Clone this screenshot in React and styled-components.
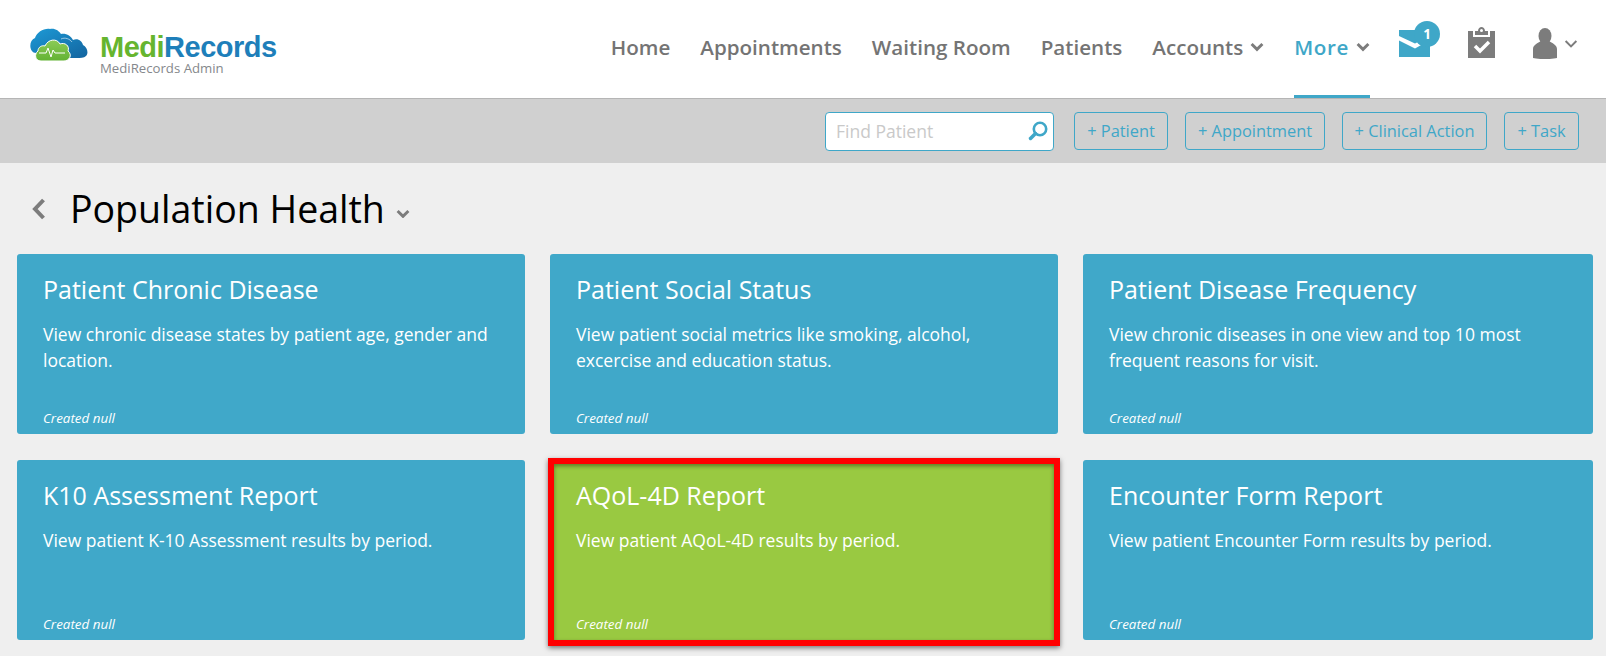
import React from "react";
import styled, { createGlobalStyle } from "styled-components";

const Global = createGlobalStyle`
  html, body { margin: 0; padding: 0; }
  body { background: #efefef; font-family: "Open Sans", "Liberation Sans", sans-serif; width: 1606px; height: 656px; overflow: hidden; }
`;

const Header = styled.header`
  height: 98px;
  background: #fff;
  border-bottom: 1px solid #b5b5b5;
  display: flex;
  align-items: stretch;
  justify-content: space-between;
  padding: 0 28px 0 30px;
`;
const Brand = styled.div`
  display: flex;
  align-items: flex-start;
  gap: 12px;
  padding-top: 28px;
`;
const BrandText = styled.div`
  display: flex;
  flex-direction: column;
  margin-top: 7px;
`;
const BrandName = styled.div`
  font-family: "Liberation Sans", sans-serif;
  font-weight: 700;
  font-size: 29px;
  line-height: 25px;
  letter-spacing: -0.5px;
  color: #1e7fba;
  & > span { color: #66b52f; }
`;
const BrandSub = styled.div`
  font-size: 13.2px;
  line-height: 14px;
  margin-top: 1px;
  color: #85888c;
`;
const Nav = styled.nav`
  display: flex;
  align-items: stretch;
  gap: 30px;
`;
const NavItem = styled.a`
  display: flex;
  align-items: center;
  gap: 7px;
  height: 98px;
  box-sizing: border-box;
  padding-bottom: 1px;
  font-size: 20.6px;
  font-weight: 600;
  letter-spacing: ${p => (p.$active ? "0.6px" : "0")};
  color: ${p => (p.$active ? "#3fa7c8" : "#747474")};
  border-bottom: 3px solid ${p => (p.$active ? "#3fa7c8" : "transparent")};
`;
const IconGroup = styled.div`
  display: flex;
  align-items: flex-start;
  margin-left: -1px;
`;
const IconButton = styled.div`
  position: relative;
  display: flex;
  align-items: center;
  gap: 7px;
  margin-top: ${p => p.$top}px;
  margin-left: ${p => p.$left}px;
`;
const Badge = styled.span`
  position: absolute;
  left: 15px;
  top: -9px;
  width: 26px;
  height: 26px;
  border-radius: 50%;
  background: #3fa7c8;
  color: #fff;
  font-size: 13.5px;
  font-weight: 700;
  line-height: 26px;
  text-align: center;
`;
const Toolbar = styled.div`
  height: 64px;
  background: #d0d0d0;
  display: flex;
  align-items: center;
  justify-content: flex-end;
  gap: 17px;
  padding: 0 27px 0 0;
`;
const Search = styled.div`
  width: 229px;
  height: 39px;
  box-sizing: border-box;
  margin-right: 3px;
  background: #fff;
  border: 1px solid #3fa7c8;
  border-radius: 4px;
  display: flex;
  align-items: center;
  justify-content: space-between;
  padding: 0 5px 1px 10px;
  font-size: 17.5px;
  color: #c9c9c9;
`;
const ActionButton = styled.button`
  height: 38px;
  box-sizing: border-box;
  width: ${p => p.$w}px;
  padding: 0 0 1px;
  background: transparent;
  border: 1px solid #3fa7c8;
  border-radius: 4px;
  font-family: inherit;
  font-size: 16.4px;
  color: #3fa7c8;
`;
const TitleRow = styled.div`
  height: 91px;
  display: flex;
  align-items: center;
  padding-left: 32px;
`;
const Title = styled.h1`
  margin: 0 0 0 24px;
  font-size: 37.5px;
  font-weight: 400;
  line-height: 50px;
  color: #000;
`;
const TitleCaret = styled.span`
  display: flex;
  margin: 10px 0 0 11px;
`;
const Grid = styled.div`
  display: grid;
  grid-template-columns: 508px 508px 510px;
  grid-auto-rows: 180px;
  column-gap: 25px;
  row-gap: 26px;
  padding-left: 17px;
`;
const Card = styled.article`
  position: relative;
  box-sizing: border-box;
  border-radius: 3px;
  background: ${p => (p.$active ? "#99c941" : "#40a8c9")};
  color: #fff;
  padding: 18px 26px 0;
  display: flex;
  flex-direction: column;
`;
const CardTitle = styled.h2`
  margin: 0;
  font-size: 25px;
  font-weight: 400;
  line-height: 34px;
`;
const CardText = styled.p`
  margin: 15px 0 0;
  font-size: 17.5px;
  line-height: 26px;
  flex: 1;
`;
const CardMeta = styled.em`
  font-size: 13.4px;
  line-height: 18px;
  padding-bottom: 7px;
`;
const Highlight = styled.div`
  position: absolute;
  inset: -2px -2px -6px -2px;
  border: 6px solid #f00;
  box-shadow: 0 2px 5px rgba(0, 0, 0, 0.5), inset 0 2px 4px rgba(0, 0, 0, 0.4);
`;

const Chevron = ({ size = 14, color = "#7c7c7c", width = 3 }) => (
  <svg width={size} height={size * 0.7} viewBox="0 0 14 10" fill="none">
    <path d="M1.5 2 L7 7.5 L12.5 2" stroke={color} strokeWidth={width} />
  </svg>
);

const Logo = () => (
  <svg width="58" height="34" viewBox="0 0 58 34">
    <defs>
      <linearGradient id="blueCloud" x1="0" y1="0" x2="1" y2="1">
        <stop offset="0" stopColor="#1d9ad6" />
        <stop offset="1" stopColor="#13649f" />
      </linearGradient>
      <linearGradient id="greenCloud" x1="0" y1="0" x2="0" y2="1">
        <stop offset="0" stopColor="#8ccb57" />
        <stop offset="1" stopColor="#62b233" />
      </linearGradient>
    </defs>
    <path
      fill="url(#blueCloud)"
      d="M2 23C-1 19 0 12 5 10C7 4 14 0 20 1C25 0 29 3 31 6C36 5 41 8 43 12C48 10 52 13 53 17C57 19 59 25 56 28C54 30 50 30 47 30L20 30L20 24L8 25C6 25 3 25 2 23Z"
    />
    <path fill="none" stroke="#fff" strokeWidth="0.8" opacity="0.7" d="M31 11C35 9 40 11 42 14" />
    <path
      fill="url(#greenCloud)"
      stroke="#fff"
      strokeWidth="1"
      d="M11 33C5 33 4 26 8 23C8 19 12 17 15 18C18 11 27 10 30 16C35 14 40 18 38 23C43 27 39 33 34 33Z"
    />
    <path d="M9 25H16L18 20L21 29L23 22L25 25H35" fill="none" stroke="#fff" strokeWidth="1" />
  </svg>
);

const Mail = () => (
  <svg width="31" height="27" viewBox="0 0 31 27">
    <rect width="31" height="27" fill="#3fa7c8" />
    <path fill="#fff" d="M0 6L16 13.500L24 9.500V14L16 18.500L0 10.500Z" />
  </svg>
);
const Clipboard = () => (
  <svg width="27" height="31" viewBox="0 0 27 31">
    <path fill="#7c7c7c" d="M0 4H5V10H22V4H27V31H0Z" />
    <path
      fill="#7c7c7c"
      fillRule="evenodd"
      d="M7 4H10C10 1.500 12 0 13.500 0C15 0 17 1.500 17 4H20V8H7ZM13.500 2A1.500 1.500 0 1 0 13.500 5A1.500 1.500 0 1 0 13.500 2Z"
    />
    <path d="M7 19L12 24L21 15" fill="none" stroke="#fff" strokeWidth="3.500" />
  </svg>
);
const User = () => (
  <svg width="24" height="31" viewBox="0 0 24 31">
    <ellipse cx="12" cy="8" rx="6.500" ry="8" fill="#7c7c7c" />
    <path fill="#7c7c7c" d="M0 21C0 17 5 15 8 13H16C19 15 24 17 24 21V30C19 31.500 5 31.500 0 30Z" />
  </svg>
);
const SearchIcon = () => (
  <svg width="20" height="20" viewBox="0 0 20 20" fill="none">
    <circle cx="12" cy="8" r="6.200" stroke="#3fa7c8" strokeWidth="2.600" />
    <path d="M7.500 12.500L2.500 17.500" stroke="#3fa7c8" strokeWidth="3.500" strokeLinecap="round" />
  </svg>
);

const cards = [
  ["Patient Chronic Disease", "View chronic disease states by patient age, gender and location."],
  ["Patient Social Status", "View patient social metrics like smoking, alcohol, excercise and education status."],
  ["Patient Disease Frequency", "View chronic diseases in one view and top 10 most frequent reasons for visit."],
  ["K10 Assessment Report", "View patient K-10 Assessment results by period."],
  ["AQoL-4D Report", "View patient AQoL-4D results by period.", true],
  ["Encounter Form Report", "View patient Encounter Form results by period."],
];

export default function App() {
  return (
    <>
      <Global />
      <Header>
        <Brand>
          <Logo />
          <BrandText>
            <BrandName><span>Medi</span>Records</BrandName>
            <BrandSub>MediRecords Admin</BrandSub>
          </BrandText>
        </Brand>
        <Nav>
          <NavItem>Home</NavItem>
          <NavItem>Appointments</NavItem>
          <NavItem>Waiting Room</NavItem>
          <NavItem>Patients</NavItem>
          <NavItem>Accounts <Chevron /></NavItem>
          <NavItem $active>More <Chevron /></NavItem>
          <IconGroup>
            <IconButton $top={30} $left={0}><Mail /><Badge>1</Badge></IconButton>
            <IconButton $top={27} $left={38}><Clipboard /></IconButton>
            <IconButton $top={28} $left={38}><User /><Chevron size={14} width={2} /></IconButton>
          </IconGroup>
        </Nav>
      </Header>
      <Toolbar>
        <Search>Find Patient<SearchIcon /></Search>
        <ActionButton $w={94}>+ Patient</ActionButton>
        <ActionButton $w={140}>+ Appointment</ActionButton>
        <ActionButton $w={145}>+ Clinical Action</ActionButton>
        <ActionButton $w={75}>+ Task</ActionButton>
      </Toolbar>
      <TitleRow>
        <svg width="14" height="22" viewBox="0 0 14 22" fill="none">
          <path d="M11.500 2L3 11L11.500 20" stroke="#7c7c7c" strokeWidth="4" />
        </svg>
        <Title>Population Health</Title>
        <TitleCaret><Chevron size={14} width={3} /></TitleCaret>
      </TitleRow>
      <Grid>
        {cards.map(([title, text, active]) => (
          <Card key={title} $active={active}>
            <CardTitle>{title}</CardTitle>
            <CardText>{text}</CardText>
            <CardMeta>Created null</CardMeta>
            {active && <Highlight />}
          </Card>
        ))}
      </Grid>
    </>
  );
}
